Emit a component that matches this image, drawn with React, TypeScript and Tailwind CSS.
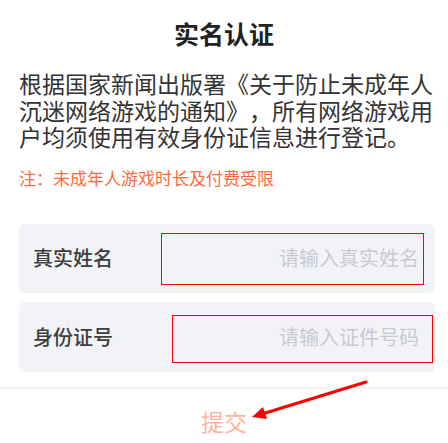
import React from "react";

const cjk = { fontFamily: '"Noto Sans CJK SC", "Noto Sans", sans-serif' };

function FieldRow({
  label,
  placeholder,
  boxClass,
  rowClass,
}: {
  label: string;
  placeholder: string;
  boxClass: string;
  rowClass: string;
}) {
  return (
    <div className={`relative flex items-center justify-between rounded-md bg-[#f2f3f7] pl-[14px] pr-[16px] ${rowClass}`}>
      <span className="text-[20px] font-medium text-[#3d3d3d]">{label}</span>
      <span className="text-[20px] text-[#c9cacf]">{placeholder}</span>
      {/* red annotation box over the input */}
      <div className={`pointer-events-none absolute border border-[#ff0000] ${boxClass}`} />
    </div>
  );
}

export default function App() {
  return (
    <div className="relative h-[443px] w-[448px] overflow-hidden bg-white [text-spacing-trim:space-all]" style={cjk}>
      <div className="flex flex-col">
        <h1 className="mt-[16px] text-center text-[25px] font-bold leading-[34px] text-[#222]">实名认证</h1>

        <p className="mt-[20px] pl-[19px] pr-[12px] text-[23px] leading-[26.6px] text-[#333]">
          根据国家新闻出版署《关于防止未成年人沉迷网络游戏的通知》，所有网络游戏用户均须使用有效身份证信息进行登记。
        </p>

        <p className="mt-[16px] px-[19px] text-[17px] leading-[24px] text-[#ff6a3c]">
          注：未成年人游戏时长及付费受限
        </p>

        <div className="mt-[34px] flex flex-col gap-[9px] pl-[19px] pr-[13px]">
          <FieldRow
            label="真实姓名"
            placeholder="请输入真实姓名"
            rowClass="h-[69px]"
            boxClass="left-[142px] top-[9px] h-[52px] w-[263px]"
          />
          <FieldRow
            label="身份证号"
            placeholder="请输入证件号码"
            rowClass="h-[70px]"
            boxClass="left-[153px] top-[13px] h-[48px] w-[261px]"
          />
        </div>

        <div className="mt-[15px] h-[2px] bg-[#f2f3f6]" />

        <button className="mt-[18px] self-center text-[23px] leading-[28px] text-[#fcb59c]">提交</button>
      </div>

      {/* red annotation arrow */}
      <svg className="pointer-events-none absolute left-0 top-0" width="448" height="443" viewBox="0 0 448 443">
        <line x1="366" y1="382" x2="262" y2="414" stroke="#ff0000" strokeWidth="3" strokeLinecap="round" />
        <polygon points="252,417 267,419 263,407" fill="#ff0000" />
      </svg>
    </div>
  );
}
